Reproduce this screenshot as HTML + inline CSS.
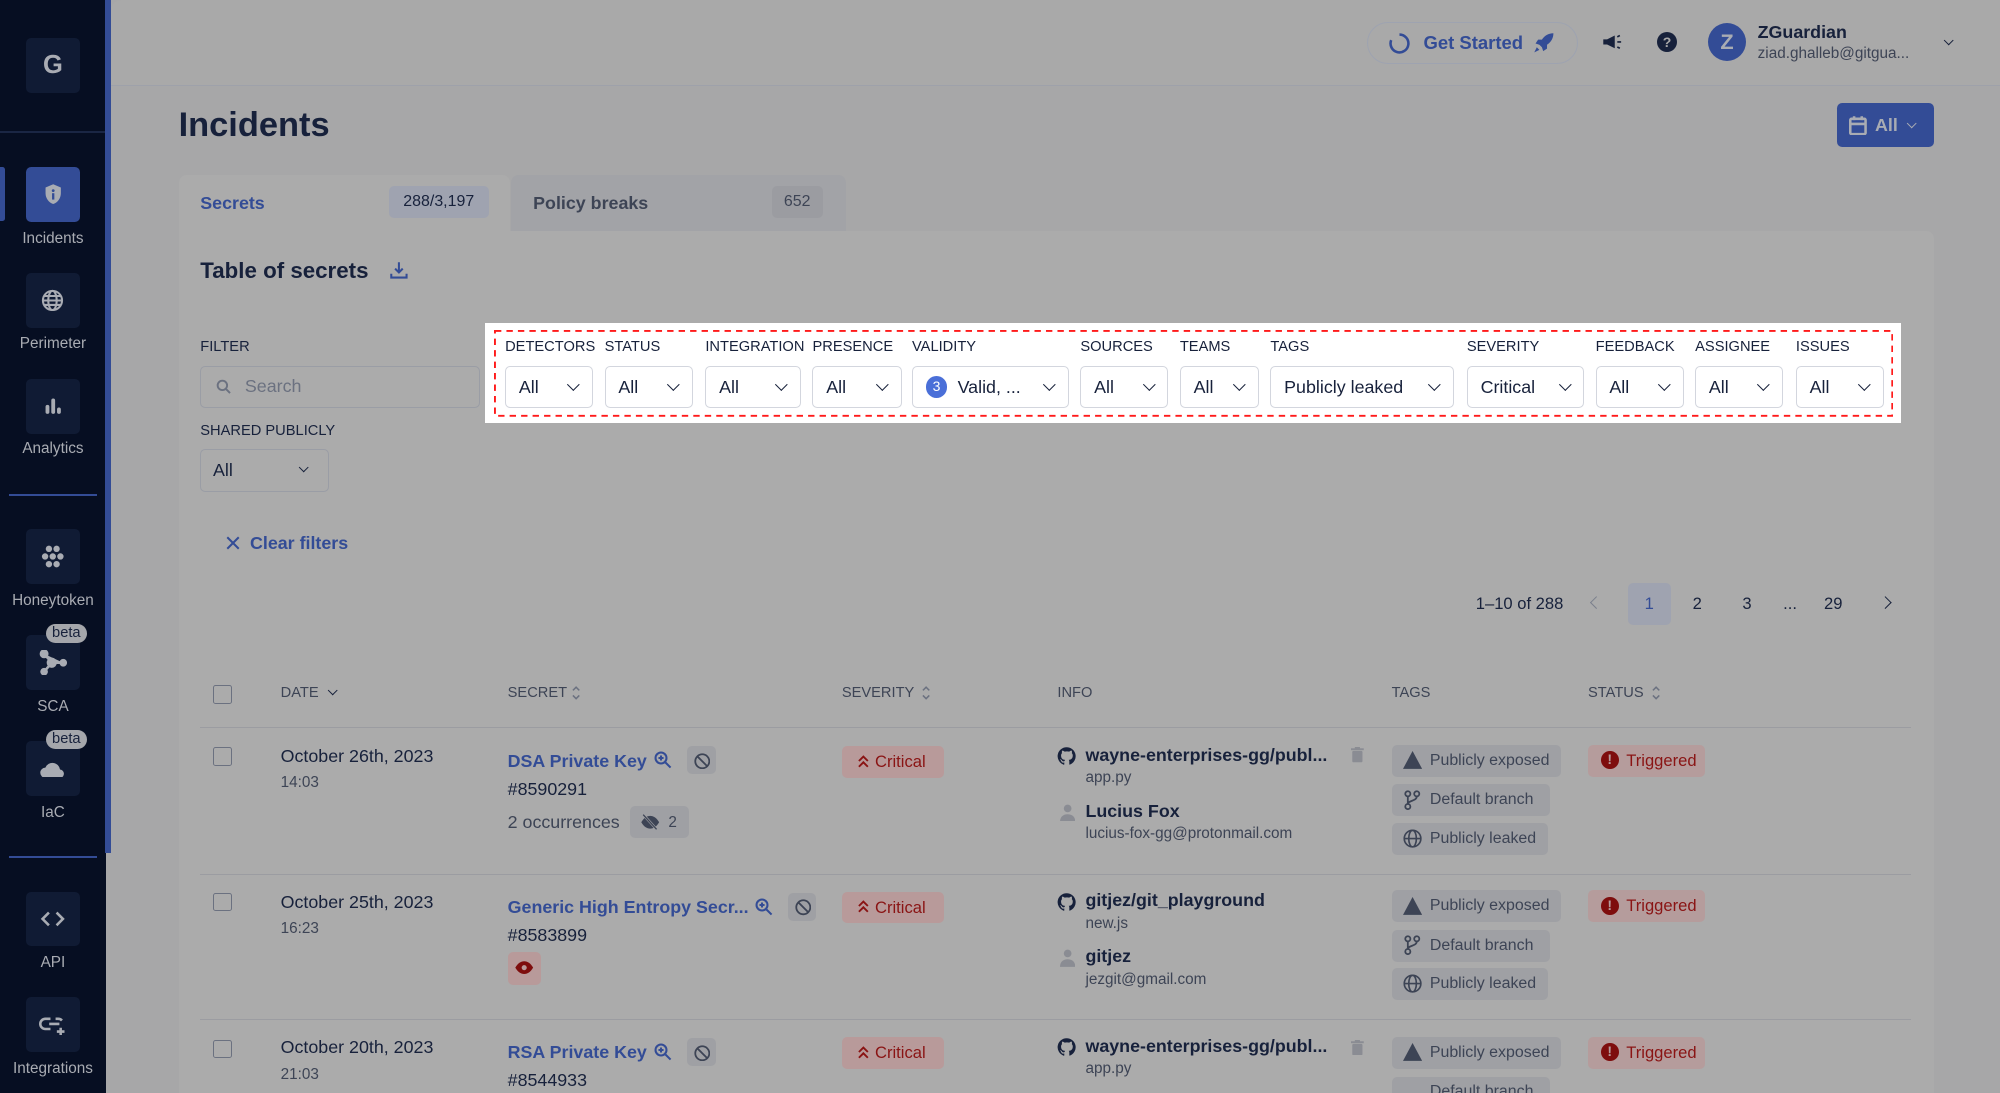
<!DOCTYPE html>
<html><head><meta charset="utf-8">
<style>
html,body{margin:0;padding:0;width:2000px;height:1093px;overflow:hidden;background:#a7a7a8;}
#w{zoom:1.27551;width:1568px;height:857px;position:relative;overflow:hidden;font-family:"Liberation Sans",sans-serif;color:#17213b;}
.a{position:absolute;}
.sb{left:0;top:0;width:83px;height:857px;background:#060e22;}
.stripe{left:82px;top:0;width:5px;height:669px;background:#334c96;}
.ib{position:absolute;left:20px;width:43px;height:43px;border-radius:4px;background:#101b34;display:flex;align-items:center;justify-content:center;}
.lbl{position:absolute;left:0;width:83px;text-align:center;font-size:12px;color:#a9acb3;}
.main{left:87px;top:0;width:1481px;height:857px;background:#a7a7a8;border-top-left-radius:8px;}
.hdr{left:87px;top:0;width:1481px;height:67px;background:#a9a9a9;border-bottom:1px solid #9ea1aa;border-top-left-radius:8px;}
.sel{position:absolute;top:287px;height:33px;box-sizing:border-box;border:1px solid #d3d6de;border-radius:4px;background:#fff;font-size:14px;color:#17213b;display:flex;align-items:center;padding-left:10px;}
.sel .c{position:absolute;right:11px;top:10px;width:6px;height:6px;border-right:1.5px solid #17213b;border-bottom:1.5px solid #17213b;transform:rotate(45deg);}
.fl{position:absolute;top:266px;font-size:11.5px;color:#17213b;}
.hd{position:absolute;top:537px;font-size:11.5px;color:#3d4455;}
.line{position:absolute;left:157px;width:1341px;height:1px;background:#9b9ca1;}
.cb{position:absolute;left:167px;width:13px;height:13px;border:1.5px solid #6b7180;border-radius:2px;}
.tag{position:absolute;height:25px;border-radius:4px;background:#9fa0a4;font-size:12.5px;color:#3d4455;display:flex;align-items:center;padding:0 9px 0 30px;box-sizing:border-box;}
.crit{position:absolute;left:660px;width:80px;height:25px;border-radius:4px;background:#b89a9a;color:#8a1414;font-size:13px;display:flex;align-items:center;padding-left:26px;box-sizing:border-box;}
.trig{position:absolute;left:1245px;width:92px;height:25px;border-radius:4px;background:#b59c9c;color:#8a1414;font-size:13px;display:flex;align-items:center;padding-left:30px;box-sizing:border-box;}
.trig:before{content:"!";position:absolute;left:10px;top:5px;width:14px;height:14px;border-radius:50%;background:#7e0d0d;color:#b59c9c;font-size:11px;font-weight:bold;text-align:center;line-height:14px;}
.ib2{position:absolute;width:22px;height:22px;border-radius:4px;background:#9fa0a4;}
.sort{position:absolute;top:536px;}
</style></head><body><div id="w">
<div class="a sb"></div>
<div class="a" style="left:0;top:103px;width:82px;height:1px;background:#1a2644"></div>
<div class="a" style="left:0;top:131px;width:4px;height:42px;background:#334c96;border-radius:0 2px 2px 0"></div>
<div class="ib" style="top:30px;color:#a9acb3;font-weight:bold;font-size:20px">G</div>
<div class="ib" style="top:131px;background:#334c96"><svg width="16" height="18" viewBox="0 0 16 18"><path d="M8 1L2 3.5V8c0 4 2.6 7.3 6 8.5 3.4-1.2 6-4.5 6-8.5V3.5z" fill="#a9acb3"/><circle cx="8" cy="6" r="1.1" fill="#334c96"/><rect x="7.1" y="8" width="1.8" height="5" fill="#334c96"/></svg></div>
<div class="lbl" style="top:180px">Incidents</div>
<div class="ib" style="top:214px"><svg width="18" height="18" viewBox="0 0 18 18" fill="none" stroke="#a9acb3" stroke-width="1.6"><circle cx="9" cy="9" r="7.5"/><ellipse cx="9" cy="9" rx="3.3" ry="7.5"/><path d="M1.5 9h15M2.5 5.5h13M2.5 12.5h13"/></svg></div>
<div class="lbl" style="top:263px">Perimeter</div>
<div class="ib" style="top:297px"><svg width="16" height="16" viewBox="0 0 16 16" fill="#a9acb3"><rect x="2" y="7" width="3" height="7" rx="1.5"/><rect x="6.5" y="2" width="3" height="12" rx="1.5"/><rect x="11" y="9" width="3" height="5" rx="1.5"/></svg></div>
<div class="lbl" style="top:345px">Analytics</div>
<div class="a" style="left:7px;top:387px;width:69px;height:1.5px;background:#334c96"></div>
<div class="ib" style="top:415px"><svg width="20" height="18" viewBox="0 0 20 18" fill="#a9acb3"><circle cx="7" cy="3" r="2.5"/><circle cx="13" cy="3" r="2.5"/><circle cx="4" cy="9" r="2.5"/><circle cx="10" cy="9" r="2.5"/><circle cx="16" cy="9" r="2.5"/><circle cx="7" cy="15" r="2.5"/><circle cx="13" cy="15" r="2.5"/></svg></div>
<div class="lbl" style="top:464px">Honeytoken</div>
<div class="ib" style="top:498px"><svg width="22" height="20" viewBox="0 0 22 20" fill="#a9acb3" stroke="#a9acb3" stroke-width="2"><circle cx="4" cy="3" r="2.5"/><circle cx="10" cy="10" r="3"/><circle cx="19" cy="10" r="2"/><circle cx="4" cy="17" r="2"/><path d="M4 3l6 7 9 0M10 10l-6 7"/></svg></div>
<div class="a" style="left:36px;top:489px;width:32px;height:15px;border-radius:8px;background:#a4a6ab;color:#17213b;font-size:11.5px;text-align:center;line-height:15px">beta</div>
<div class="lbl" style="top:547px">SCA</div>
<div class="ib" style="top:581px"><svg width="22" height="14" viewBox="0 0 22 14" fill="#a9acb3"><path d="M5 14a4 4 0 010-8 6 6 0 0111.5 1.5A3.3 3.3 0 0117 14z"/></svg></div>
<div class="a" style="left:36px;top:572px;width:32px;height:15px;border-radius:8px;background:#a4a6ab;color:#17213b;font-size:11.5px;text-align:center;line-height:15px">beta</div>
<div class="lbl" style="top:630px">IaC</div>
<div class="a" style="left:7px;top:671px;width:69px;height:1.5px;background:#334c96"></div>
<div class="ib" style="top:699px"><svg width="20" height="14" viewBox="0 0 20 14" fill="none" stroke="#a9acb3" stroke-width="2"><path d="M7 2L2 7l5 5M13 2l5 5-5 5"/></svg></div>
<div class="lbl" style="top:748px">API</div>
<div class="ib" style="top:782px"><svg width="22" height="16" viewBox="0 0 22 16" fill="none" stroke="#a9acb3" stroke-width="2"><path d="M9 3H5a4 4 0 000 8h4M8 7h8M13 3h2a4 4 0 013 1.3M17 10v6M14 13h6"/></svg></div>
<div class="lbl" style="top:831px">Integrations</div>
<div class="a stripe"></div>

<div class="a main"></div>
<div class="a hdr"></div>
<div class="a" style="left:1072px;top:17px;width:165px;height:33px;box-sizing:border-box;border:1px solid #9ea3b0;border-radius:17px"></div>
<svg class="a" style="left:1088px;top:25px" width="18" height="18" viewBox="0 0 18 18"><path d="M9 2a7 7 0 11-6.5 4.4" fill="none" stroke="#334c96" stroke-width="2"/></svg>
<div class="a" style="left:1116px;top:25px;font-size:14.5px;font-weight:bold;color:#334c96">Get Started</div>
<svg class="a" style="left:1202px;top:25px" width="17" height="17" viewBox="0 0 17 17" fill="#334c96"><path d="M16 1c-4 0-7 2-9 5L4 6 2 9l3 1 2 2 1 3 3-2v-3c3-2 5-5 5-9zM3 12l-2 4 4-2z"/></svg>
<svg class="a" style="left:1256px;top:26px" width="16" height="14" viewBox="0 0 16 14" fill="#17213b"><path d="M1 5h3l6-3v10L4 9H1z"/><path d="M12 3l2-1M12 7h3M12 11l2 1" stroke="#17213b" stroke-width="1.3"/></svg>
<div class="a" style="left:1299px;top:25px;width:16px;height:16px;border-radius:50%;background:#17213b;color:#a9a9a9;font-size:11px;font-weight:bold;text-align:center;line-height:16px">?</div>
<div class="a" style="left:1339px;top:18px;width:30px;height:30px;border-radius:50%;background:#334c96;color:#a9acb3;font-size:17px;font-weight:bold;text-align:center;line-height:30px">Z</div>
<div class="a" style="left:1378px;top:17px;font-size:14px;font-weight:bold;color:#17213b">ZGuardian</div>
<div class="a" style="left:1378px;top:35px;font-size:12px;color:#3d4455">ziad.ghalleb@gitgua...</div>
<div class="a" style="left:1525px;top:29px;width:5px;height:5px;border-right:1.5px solid #17213b;border-bottom:1.5px solid #17213b;transform:rotate(45deg)"></div>

<div class="a" style="left:140px;top:83px;font-size:27px;font-weight:bold;color:#17213b">Incidents</div>
<div class="a" style="left:1440px;top:81px;width:76px;height:34px;border-radius:4px;background:#334c96"></div>
<svg class="a" style="left:1450px;top:90px" width="14" height="16" viewBox="0 0 14 16" fill="none" stroke="#a9acb3" stroke-width="2"><rect x="1" y="3" width="12" height="12" rx="1"/><path d="M1 7h12M4 1v3M10 1v3"/></svg>
<div class="a" style="left:1470px;top:90px;font-size:14px;font-weight:bold;color:#a9acb3">All</div>
<div class="a" style="left:1496px;top:94px;width:5px;height:5px;border-right:1.5px solid #a9acb3;border-bottom:1.5px solid #a9acb3;transform:rotate(45deg)"></div>

<div class="a" style="left:140px;top:137px;width:260px;height:50px;background:#ababab;border-radius:6px 6px 0 0"></div>
<div class="a" style="left:401px;top:137px;width:262px;height:44px;background:#a2a3a7;border-radius:6px 6px 0 0"></div>
<div class="a" style="left:157px;top:151px;font-size:14px;font-weight:bold;color:#334c96">Secrets</div>
<div class="a" style="left:305px;top:146px;width:78px;height:25px;border-radius:4px;background:#9fa3b0;font-size:12.5px;color:#17213b;text-align:center;line-height:25px">288/3,197</div>
<div class="a" style="left:418px;top:151px;font-size:14px;font-weight:bold;color:#3d4455">Policy breaks</div>
<div class="a" style="left:605px;top:146px;width:40px;height:25px;border-radius:4px;background:#9b9ca1;font-size:12.5px;color:#3d4455;text-align:center;line-height:25px">652</div>
<div class="a" style="left:140px;top:181px;width:1376px;height:676px;background:#ababab;border-radius:0 6px 0 0"></div>

<div class="a" style="left:157px;top:202px;font-size:17.5px;font-weight:bold;color:#17213b">Table of secrets</div>
<svg class="a" style="left:306px;top:205px" width="14" height="14" viewBox="0 0 14 14" fill="none" stroke="#334c96" stroke-width="1.6"><path d="M7 1v8M4 6l3 3 3-3M1 10v3h12v-3"/></svg>

<div class="fl" style="left:157px">FILTER</div>
<div class="a" style="left:157px;top:287px;width:219px;height:33px;box-sizing:border-box;border:1px solid #9a9da5;border-radius:4px"></div>
<svg class="a" style="left:169px;top:297px" width="12" height="12" viewBox="0 0 12 12" fill="none" stroke="#6b7180" stroke-width="1.5"><circle cx="5" cy="5" r="3.7"/><path d="M8 8l3 3"/></svg>
<div class="a" style="left:192px;top:295px;font-size:14px;color:#6b7180">Search</div>
<div class="fl" style="left:157px;top:332px">SHARED PUBLICLY</div>
<div class="a" style="left:157px;top:352px;width:101px;height:34px;box-sizing:border-box;border:1px solid #9a9da5;border-radius:4px"></div>
<div class="a" style="left:167px;top:361px;font-size:14px">All</div>
<div class="a" style="left:235px;top:364px;width:5px;height:5px;border-right:1.5px solid #17213b;border-bottom:1.5px solid #17213b;transform:rotate(45deg)"></div>

<div class="a" style="left:380px;top:253px;width:1110px;height:79px;background:#fff"></div>
<svg class="a" style="left:387px;top:259px" width="1097" height="68"><rect x="0.75" y="0.75" width="1095.5" height="66.5" fill="none" stroke="#ff1a1a" stroke-width="1.5" stroke-dasharray="5 4"/></svg>
<div class="fl" style="left:396px">DETECTORS</div><div class="sel" style="left:396px;width:69px">All<span class="c"></span></div>
<div class="fl" style="left:474px">STATUS</div><div class="sel" style="left:474px;width:69px">All<span class="c"></span></div>
<div class="fl" style="left:553px">INTEGRATION</div><div class="sel" style="left:553px;width:75px">All<span class="c"></span></div>
<div class="fl" style="left:637px">PRESENCE</div><div class="sel" style="left:637px;width:70px">All<span class="c"></span></div>
<div class="fl" style="left:715px">VALIDITY</div><div class="sel" style="left:715px;width:123px"><span style="display:inline-block;width:17px;height:17px;border-radius:50%;background:#4a6fd8;color:#fff;font-size:11px;text-align:center;line-height:17px;margin-right:8px">3</span>Valid, ...<span class="c"></span></div>
<div class="fl" style="left:847px">SOURCES</div><div class="sel" style="left:847px;width:69px">All<span class="c"></span></div>
<div class="fl" style="left:925px">TEAMS</div><div class="sel" style="left:925px;width:62px">All<span class="c"></span></div>
<div class="fl" style="left:996px">TAGS</div><div class="sel" style="left:996px;width:144px">Publicly leaked<span class="c"></span></div>
<div class="fl" style="left:1150px">SEVERITY</div><div class="sel" style="left:1150px;width:92px">Critical<span class="c"></span></div>
<div class="fl" style="left:1251px">FEEDBACK</div><div class="sel" style="left:1251px;width:69px">All<span class="c"></span></div>
<div class="fl" style="left:1329px">ASSIGNEE</div><div class="sel" style="left:1329px;width:69px">All<span class="c"></span></div>
<div class="fl" style="left:1408px">ISSUES</div><div class="sel" style="left:1408px;width:69px">All<span class="c"></span></div>

<svg class="a" style="left:177px;top:420px" width="11" height="11" viewBox="0 0 11 11" stroke="#334c96" stroke-width="1.6"><path d="M1 1l9 9M10 1l-9 9"/></svg>
<div class="a" style="left:196px;top:418px;font-size:14px;font-weight:bold;color:#334c96">Clear filters</div>

<div class="a" style="left:1157px;top:466px;font-size:13px;color:#17213b">1–10 of 288</div>
<div class="a" style="left:1248px;top:469px;width:6px;height:6px;border-left:1.5px solid #7a7f8c;border-bottom:1.5px solid #7a7f8c;transform:rotate(45deg)"></div>
<div class="a" style="left:1276px;top:457px;width:34px;height:33px;border-radius:4px;background:#9fa3b0;color:#334c96;font-size:13px;text-align:center;line-height:33px">1</div>
<div class="a" style="left:1327px;top:466px;font-size:13px">2</div>
<div class="a" style="left:1366px;top:466px;font-size:13px">3</div>
<div class="a" style="left:1398px;top:466px;font-size:13px">...</div>
<div class="a" style="left:1430px;top:466px;font-size:13px">29</div>
<div class="a" style="left:1475px;top:469px;width:6px;height:6px;border-right:1.5px solid #17213b;border-top:1.5px solid #17213b;transform:rotate(45deg)"></div>

<div class="cb" style="top:537px"></div>
<div class="hd" style="left:220px">DATE</div>
<div class="a" style="left:258px;top:539px;width:5px;height:5px;border-right:1.5px solid #17213b;border-bottom:1.5px solid #17213b;transform:rotate(45deg)"></div>
<div class="hd" style="left:398px">SECRET</div>
<svg class="sort" style="left:448px" width="8" height="14" viewBox="0 0 8 14" fill="none" stroke="#6b7180" stroke-width="1.2"><path d="M1.5 5L4 2.5 6.5 5M1.5 9L4 11.5 6.5 9"/></svg>
<div class="hd" style="left:660px">SEVERITY</div>
<svg class="sort" style="left:722px" width="8" height="14" viewBox="0 0 8 14" fill="none" stroke="#6b7180" stroke-width="1.2"><path d="M1.5 5L4 2.5 6.5 5M1.5 9L4 11.5 6.5 9"/></svg>
<div class="hd" style="left:829px">INFO</div>
<div class="hd" style="left:1091px">TAGS</div>
<div class="hd" style="left:1245px">STATUS</div>
<svg class="sort" style="left:1294px" width="8" height="14" viewBox="0 0 8 14" fill="none" stroke="#6b7180" stroke-width="1.2"><path d="M1.5 5L4 2.5 6.5 5M1.5 9L4 11.5 6.5 9"/></svg>
<div class="line" style="top:570px"></div>
<div class="line" style="top:685px"></div>
<div class="line" style="top:799px"></div>

<!-- row 1 -->
<div class="cb" style="top:586px"></div>
<div class="a" style="left:220px;top:585px;font-size:14px">October 26th, 2023</div>
<div class="a" style="left:220px;top:607px;font-size:12px;color:#3d4455">14:03</div>
<div class="a" style="left:398px;top:589px;font-size:14px;font-weight:bold;color:#334c96">DSA Private Key</div>
<svg class="a" style="left:513px;top:589px" width="14" height="14" viewBox="0 0 14 14" fill="none" stroke="#334c96" stroke-width="1.6"><circle cx="5.5" cy="5.5" r="4.3"/><path d="M9 9l4 4M5.5 3.5v4M3.5 5.5h4"/></svg>
<div class="ib2" style="left:539px;top:585px"></div>
<svg class="a" style="left:544px;top:590px" width="13" height="13" viewBox="0 0 13 13" fill="none" stroke="#3d4455" stroke-width="1.4"><circle cx="6.5" cy="6.5" r="5.5"/><path d="M2.6 2.6l7.8 7.8"/></svg>
<div class="a" style="left:398px;top:611px;font-size:14px">#8590291</div>
<div class="a" style="left:398px;top:637px;font-size:14px;color:#3d4455">2 occurrences</div>
<div class="a" style="left:494px;top:632px;width:46px;height:25px;border-radius:4px;background:#9fa0a4"></div>
<svg class="a" style="left:502px;top:638px" width="16" height="13" viewBox="0 0 16 13"><path d="M1 6.5C3 3 5.5 1.5 8 1.5s5 1.5 7 5c-2 3.5-4.5 5-7 5s-5-1.5-7-5z" fill="#3d4455"/><path d="M3 1l10 11" stroke="#9fa0a4" stroke-width="2"/><path d="M2.5 0.5l10.5 11.5" stroke="#3d4455" stroke-width="1"/></svg>
<div class="a" style="left:524px;top:638px;font-size:12px;color:#3d4455">2</div>
<div class="crit" style="top:585px">Critical</div>
<svg class="a" style="left:672px;top:591px" width="10" height="12" viewBox="0 0 10 12" fill="none" stroke="#8a1414" stroke-width="1.5"><path d="M1.5 5.5L5 2l3.5 3.5M1.5 10L5 6.5 8.5 10"/></svg>
<svg class="a" style="left:829px;top:585px" width="15" height="16" viewBox="0 0 16 16"><path d="M8 .5a7.5 7.5 0 00-2.4 14.6c.4.1.5-.2.5-.4v-1.4c-2.1.5-2.5-1-2.5-1-.3-.9-.8-1.1-.8-1.1-.7-.5.1-.5.1-.5.8.1 1.200.8 1.2.8.7 1.2 1.8.8 2.2.6.1-.5.3-.8.5-1-1.7-.2-3.4-.8-3.4-3.7 0-.8.3-1.5.8-2-.1-.2-.3-1 .1-2 0 0 .6-.2 2.1.8a7 7 0 013.8 0c1.4-1 2.1-.8 2.1-.8.4 1 .2 1.8.1 2 .5.5.8 1.2.8 2 0 2.9-1.8 3.5-3.4 3.7.3.2.5.7.5 1.4v2.1c0 .2.1.5.5.4A7.5 7.5 0 008 .5z" fill="#17213b"/></svg>
<div class="a" style="left:851px;top:584px;font-size:14px;font-weight:bold">wayne-enterprises-gg/publ...</div>
<svg class="a" style="left:1059px;top:586px" width="10" height="12" viewBox="0 0 10 12" fill="#8a8c93"><rect x="0" y="1" width="10" height="1.5"/><rect x="3" y="0" width="4" height="1.5"/><rect x="1" y="3" width="8" height="9" rx="1"/></svg>
<div class="a" style="left:851px;top:603px;font-size:12px;color:#3d4455">app.py</div>
<svg class="a" style="left:831px;top:630px" width="12" height="14" viewBox="0 0 12 14" fill="#8a8c93"><circle cx="6" cy="3.5" r="3"/><path d="M0 14c0-4 2.5-6 6-6s6 2 6 6z"/></svg>
<div class="a" style="left:851px;top:628px;font-size:14px;font-weight:bold">Lucius Fox</div>
<div class="a" style="left:851px;top:647px;font-size:12px;color:#3d4455">lucius-fox-gg@protonmail.com</div>
<div class="tag" style="left:1091px;top:584px;width:133px">Publicly exposed</div>
<svg class="a" style="left:1100px;top:589px" width="15" height="14" viewBox="0 0 15 14"><path d="M7.5 0L15 14H0z" fill="#3d4455"/></svg>
<div class="tag" style="left:1091px;top:615px;width:124px">Default branch</div>
<svg class="a" style="left:1101px;top:619px" width="13" height="16" viewBox="0 0 13 16" fill="none" stroke="#3d4455" stroke-width="1.4"><circle cx="3" cy="3" r="2"/><circle cx="10" cy="3" r="2"/><circle cx="3" cy="13" r="2"/><path d="M3 5v6M10 5c0 4-7 3-7 6"/></svg>
<div class="tag" style="left:1091px;top:645px;width:123px">Publicly leaked</div>
<svg class="a" style="left:1100px;top:650px" width="15" height="15" viewBox="0 0 15 15" fill="none" stroke="#3d4455" stroke-width="1.3"><circle cx="7.5" cy="7.5" r="6.5"/><ellipse cx="7.5" cy="7.5" rx="3" ry="6.5"/><path d="M1 7.5h13"/></svg>
<div class="trig" style="top:584px">Triggered</div>

<!-- row 2 -->
<div class="cb" style="top:700px"></div>
<div class="a" style="left:220px;top:699px;font-size:14px">October 25th, 2023</div>
<div class="a" style="left:220px;top:721px;font-size:12px;color:#3d4455">16:23</div>
<div class="a" style="left:398px;top:703px;font-size:14px;font-weight:bold;color:#334c96">Generic High Entropy Secr...</div>
<svg class="a" style="left:592px;top:704px" width="14" height="14" viewBox="0 0 14 14" fill="none" stroke="#334c96" stroke-width="1.6"><circle cx="5.5" cy="5.5" r="4.3"/><path d="M9 9l4 4M5.5 3.5v4M3.5 5.5h4"/></svg>
<div class="ib2" style="left:618px;top:700px"></div>
<svg class="a" style="left:623px;top:705px" width="13" height="13" viewBox="0 0 13 13" fill="none" stroke="#3d4455" stroke-width="1.4"><circle cx="6.5" cy="6.5" r="5.5"/><path d="M2.6 2.6l7.8 7.8"/></svg>
<div class="a" style="left:398px;top:725px;font-size:14px">#8583899</div>
<div class="a" style="left:398px;top:746px;width:26px;height:26px;border-radius:4px;background:#b89a9a"></div>
<svg class="a" style="left:403px;top:753px" width="16" height="12" viewBox="0 0 16 12"><path d="M1 6C3 2.5 5.5 1 8 1s5 1.5 7 5c-2 3.5-4.5 5-7 5S3 9.5 1 6z" fill="#7e0d0d"/><circle cx="8" cy="6" r="2" fill="#b89a9a"/></svg>
<div class="crit" style="top:699px">Critical</div>
<svg class="a" style="left:672px;top:705px" width="10" height="12" viewBox="0 0 10 12" fill="none" stroke="#8a1414" stroke-width="1.5"><path d="M1.5 5.5L5 2l3.5 3.5M1.5 10L5 6.5 8.5 10"/></svg>
<svg class="a" style="left:829px;top:699px" width="15" height="16" viewBox="0 0 16 16"><path d="M8 .5a7.5 7.5 0 00-2.4 14.6c.4.1.5-.2.5-.4v-1.4c-2.1.5-2.5-1-2.5-1-.3-.9-.8-1.1-.8-1.1-.7-.5.1-.5.1-.5.8.1 1.2.8 1.2.8.7 1.2 1.8.8 2.2.6.1-.5.3-.8.5-1-1.7-.2-3.4-.8-3.4-3.7 0-.8.3-1.5.8-2-.1-.2-.3-1 .1-2 0 0 .6-.2 2.1.8a7 7 0 013.8 0c1.4-1 2.1-.8 2.1-.8.4 1 .2 1.8.1 2 .5.5.8 1.2.8 2 0 2.9-1.8 3.5-3.4 3.7.3.2.5.7.5 1.4v2.1c0 .2.1.5.5.4A7.5 7.5 0 008 .5z" fill="#17213b"/></svg>
<div class="a" style="left:851px;top:698px;font-size:14px;font-weight:bold">gitjez/git_playground</div>
<div class="a" style="left:851px;top:717px;font-size:12px;color:#3d4455">new.js</div>
<svg class="a" style="left:831px;top:744px" width="12" height="14" viewBox="0 0 12 14" fill="#8a8c93"><circle cx="6" cy="3.5" r="3"/><path d="M0 14c0-4 2.5-6 6-6s6 2 6 6z"/></svg>
<div class="a" style="left:851px;top:742px;font-size:14px;font-weight:bold">gitjez</div>
<div class="a" style="left:851px;top:761px;font-size:12px;color:#3d4455">jezgit@gmail.com</div>
<div class="tag" style="left:1091px;top:698px;width:133px">Publicly exposed</div>
<svg class="a" style="left:1100px;top:703px" width="15" height="14" viewBox="0 0 15 14"><path d="M7.5 0L15 14H0z" fill="#3d4455"/></svg>
<div class="tag" style="left:1091px;top:729px;width:124px">Default branch</div>
<svg class="a" style="left:1101px;top:733px" width="13" height="16" viewBox="0 0 13 16" fill="none" stroke="#3d4455" stroke-width="1.4"><circle cx="3" cy="3" r="2"/><circle cx="10" cy="3" r="2"/><circle cx="3" cy="13" r="2"/><path d="M3 5v6M10 5c0 4-7 3-7 6"/></svg>
<div class="tag" style="left:1091px;top:759px;width:123px">Publicly leaked</div>
<svg class="a" style="left:1100px;top:764px" width="15" height="15" viewBox="0 0 15 15" fill="none" stroke="#3d4455" stroke-width="1.3"><circle cx="7.5" cy="7.5" r="6.5"/><ellipse cx="7.5" cy="7.5" rx="3" ry="6.5"/><path d="M1 7.5h13"/></svg>
<div class="trig" style="top:698px">Triggered</div>

<!-- row 3 -->
<div class="cb" style="top:815px"></div>
<div class="a" style="left:220px;top:813px;font-size:14px">October 20th, 2023</div>
<div class="a" style="left:220px;top:836px;font-size:12px;color:#3d4455">21:03</div>
<div class="a" style="left:398px;top:817px;font-size:14px;font-weight:bold;color:#334c96">RSA Private Key</div>
<svg class="a" style="left:513px;top:818px" width="14" height="14" viewBox="0 0 14 14" fill="none" stroke="#334c96" stroke-width="1.6"><circle cx="5.5" cy="5.5" r="4.3"/><path d="M9 9l4 4M5.5 3.5v4M3.5 5.5h4"/></svg>
<div class="ib2" style="left:539px;top:814px"></div>
<svg class="a" style="left:544px;top:819px" width="13" height="13" viewBox="0 0 13 13" fill="none" stroke="#3d4455" stroke-width="1.4"><circle cx="6.5" cy="6.5" r="5.5"/><path d="M2.6 2.6l7.8 7.8"/></svg>
<div class="a" style="left:398px;top:839px;font-size:14px">#8544933</div>
<div class="crit" style="top:813px">Critical</div>
<svg class="a" style="left:672px;top:819px" width="10" height="12" viewBox="0 0 10 12" fill="none" stroke="#8a1414" stroke-width="1.5"><path d="M1.5 5.5L5 2l3.5 3.5M1.5 10L5 6.5 8.5 10"/></svg>
<svg class="a" style="left:829px;top:813px" width="15" height="16" viewBox="0 0 16 16"><path d="M8 .5a7.5 7.5 0 00-2.4 14.6c.4.1.5-.2.5-.4v-1.4c-2.1.5-2.5-1-2.5-1-.3-.9-.8-1.1-.8-1.1-.7-.5.1-.5.1-.5.8.1 1.2.8 1.2.8.7 1.2 1.8.8 2.2.6.1-.5.3-.8.5-1-1.7-.2-3.4-.8-3.4-3.7 0-.8.3-1.5.8-2-.1-.2-.3-1 .1-2 0 0 .6-.2 2.1.8a7 7 0 013.8 0c1.4-1 2.1-.8 2.1-.8.4 1 .2 1.8.1 2 .5.5.8 1.2.8 2 0 2.9-1.8 3.5-3.4 3.7.3.2.5.7.5 1.4v2.1c0 .2.1.5.5.4A7.5 7.5 0 008 .5z" fill="#17213b"/></svg>
<div class="a" style="left:851px;top:812px;font-size:14px;font-weight:bold">wayne-enterprises-gg/publ...</div>
<svg class="a" style="left:1059px;top:815px" width="10" height="12" viewBox="0 0 10 12" fill="#8a8c93"><rect x="0" y="1" width="10" height="1.5"/><rect x="3" y="0" width="4" height="1.5"/><rect x="1" y="3" width="8" height="9" rx="1"/></svg>
<div class="a" style="left:851px;top:831px;font-size:12px;color:#3d4455">app.py</div>
<div class="tag" style="left:1091px;top:813px;width:133px">Publicly exposed</div>
<svg class="a" style="left:1100px;top:818px" width="15" height="14" viewBox="0 0 15 14"><path d="M7.5 0L15 14H0z" fill="#3d4455"/></svg>
<div class="tag" style="left:1091px;top:844px;width:124px">Default branch</div>
<div class="trig" style="top:813px">Triggered</div>
</div></body></html>
